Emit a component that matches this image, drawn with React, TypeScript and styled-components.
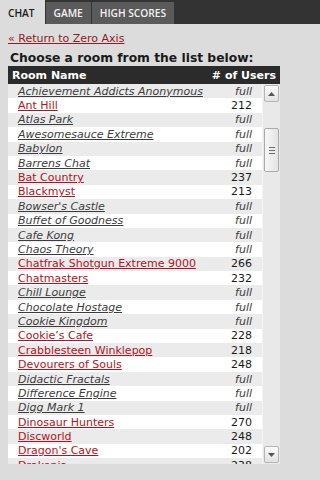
import styled, { createGlobalStyle } from "styled-components";

const GlobalStyle = createGlobalStyle`
    html, body {
        margin: 0;
        padding: 0;
        background: #dcdcdc;
        font-family: "DejaVu Sans", Verdana, sans-serif;
    }
`;

type Room = {
    name: string;
    users: number | null;
};

const rooms: Room[] = [
    { name: "Achievement Addicts Anonymous", users: null },
    { name: "Ant Hill", users: 212 },
    { name: "Atlas Park", users: null },
    { name: "Awesomesauce Extreme", users: null },
    { name: "Babylon", users: null },
    { name: "Barrens Chat", users: null },
    { name: "Bat Country", users: 237 },
    { name: "Blackmyst", users: 213 },
    { name: "Bowser's Castle", users: null },
    { name: "Buffet of Goodness", users: null },
    { name: "Cafe Kong", users: null },
    { name: "Chaos Theory", users: null },
    { name: "Chatfrak Shotgun Extreme 9000", users: 266 },
    { name: "Chatmasters", users: 232 },
    { name: "Chill Lounge", users: null },
    { name: "Chocolate Hostage", users: null },
    { name: "Cookie Kingdom", users: null },
    { name: "Cookie’s Cafe", users: 228 },
    { name: "Crabblesteen Winklepop", users: 218 },
    { name: "Devourers of Souls", users: 248 },
    { name: "Didactic Fractals", users: null },
    { name: "Difference Engine", users: null },
    { name: "Digg Mark 1", users: null },
    { name: "Dinosaur Hunters", users: 270 },
    { name: "Discworld", users: 248 },
    { name: "Dragon's Cave", users: 202 },
    { name: "Drakonia", users: 238 },
];

function App() {
    return (
        <Page>
            <GlobalStyle />
            <TabBar>
                <Tab $active>CHAT</Tab>
                <Tab>GAME</Tab>
                <Tab>HIGH SCORES</Tab>
            </TabBar>

            <Content>
                <BackLink href="#">« Return to Zero Axis</BackLink>
                <Prompt>Choose a room from the list below:</Prompt>

                <TableHead>
                    <span>Room Name</span>
                    <span># of Users</span>
                </TableHead>

                <ListBox>
                    <Rows>
                        {rooms.map((room, i) => (
                            <Row key={room.name} $odd={i % 2 === 0}>
                                <RoomLink href="#" $full={room.users === null}>
                                    {room.name}
                                </RoomLink>
                                <Count $full={room.users === null}>
                                    {room.users === null ? "full" : room.users}
                                </Count>
                            </Row>
                        ))}
                    </Rows>

                    <ScrollBar>
                        <ScrollButton>
                            <svg width="7" height="4" viewBox="0 0 7 4">
                                <path d="M0 4 L3.5 0 L7 4 Z" fill="#555" />
                            </svg>
                        </ScrollButton>
                        <Track>
                            <Thumb>
                                <Grip />
                                <Grip />
                                <Grip />
                            </Thumb>
                        </Track>
                        <ScrollButton>
                            <svg width="7" height="4" viewBox="0 0 7 4">
                                <path d="M0 0 L3.5 4 L7 0 Z" fill="#555" />
                            </svg>
                        </ScrollButton>
                    </ScrollBar>
                </ListBox>
            </Content>
        </Page>
    );
}
export default App;

// style
const Page = styled.div`
    width: 100%;
    height: 480px;
    background: #dcdcdc;
    overflow: hidden;
`;

const TabBar = styled.div`
    display: flex;
    gap: 1px;
    height: 24px;
    padding-top: 2px;
    box-sizing: border-box;
    background: #333333;
`;

const Tab = styled.div<{ $active?: boolean }>`
    display: flex;
    align-items: center;
    padding: 0 8px;
    font-family: "Open Sans", sans-serif;
    font-weight: 600;
    font-size: 10.2px;
    color: ${(p) => (p.$active ? "#1a1a1a" : "#f2f2f2")};
    background: ${(p) => (p.$active ? "#dcdcdc" : "#5a5a5a")};
    ${(p) => p.$active && "margin-top: -2px; padding-top: 2px; padding-right: 10px;"}
`;

const Content = styled.div`
    display: flex;
    flex-direction: column;
    width: 272px;
    padding: 8px 8px 0 8px;
`;

const BackLink = styled.a`
    align-self: flex-start;
    font-size: 11px;
    line-height: 14px;
    color: #8e1b25;
    text-decoration: underline;
    margin-bottom: 5px;
`;

const Prompt = styled.div`
    font-size: 12.3px;
    font-weight: bold;
    color: #1a1a1a;
    line-height: 15px;
    padding-left: 2px;
    white-space: nowrap;
`;

const TableHead = styled.div`
    display: flex;
    justify-content: space-between;
    align-items: center;
    height: 18px;
    padding: 0 4px;
    background: #2b2b2b;
    color: #ffffff;
    font-size: 11px;
    font-weight: bold;
`;

const ListBox = styled.div`
    display: flex;
    height: 380px;
    overflow: hidden;
    background: #ffffff;
`;

const Rows = styled.div`
    flex: 1;
    display: flex;
    flex-direction: column;
`;

const Row = styled.div<{ $odd: boolean }>`
    flex: none;
    display: flex;
    justify-content: space-between;
    align-items: center;
    height: 14.4px;
    padding: 0 10px;
    background: ${(p) => (p.$odd ? "#ebebeb" : "#ffffff")};
    font-size: 11px;
`;

const RoomLink = styled.a<{ $full: boolean }>`
    color: ${(p) => (p.$full ? "#3c3c3c" : "#b3131d")};
    font-style: ${(p) => (p.$full ? "italic" : "normal")};
    text-decoration: underline;
    white-space: nowrap;
`;

const Count = styled.span<{ $full: boolean }>`
    color: ${(p) => (p.$full ? "#3c3c3c" : "#1a1a1a")};
    font-style: ${(p) => (p.$full ? "italic" : "normal")};
`;

const ScrollBar = styled.div`
    flex: none;
    width: 17px;
    display: flex;
    flex-direction: column;
    background: #e9e9e9;
    border-left: 1px solid #f4f4f4;
`;

const ScrollButton = styled.div`
    flex: none;
    height: 15px;
    margin: 1px;
    display: flex;
    align-items: center;
    justify-content: center;
    border: 1px solid #b5b5b5;
    border-radius: 2px;
    background: linear-gradient(#fbfbfb, #e2e2e2);
`;

const Track = styled.div`
    flex: 1;
    display: flex;
    flex-direction: column;
    padding-top: 25px;
`;

const Thumb = styled.div`
    height: 44px;
    margin: 0 1px;
    display: flex;
    flex-direction: column;
    align-items: center;
    justify-content: center;
    gap: 2px;
    border: 1px solid #a9a9a9;
    border-radius: 2px;
    box-sizing: border-box;
    background: linear-gradient(90deg, #f7f7f7, #e4e4e4);
`;

const Grip = styled.div`
    width: 6px;
    height: 1px;
    background: #6b6b6b;
`;
